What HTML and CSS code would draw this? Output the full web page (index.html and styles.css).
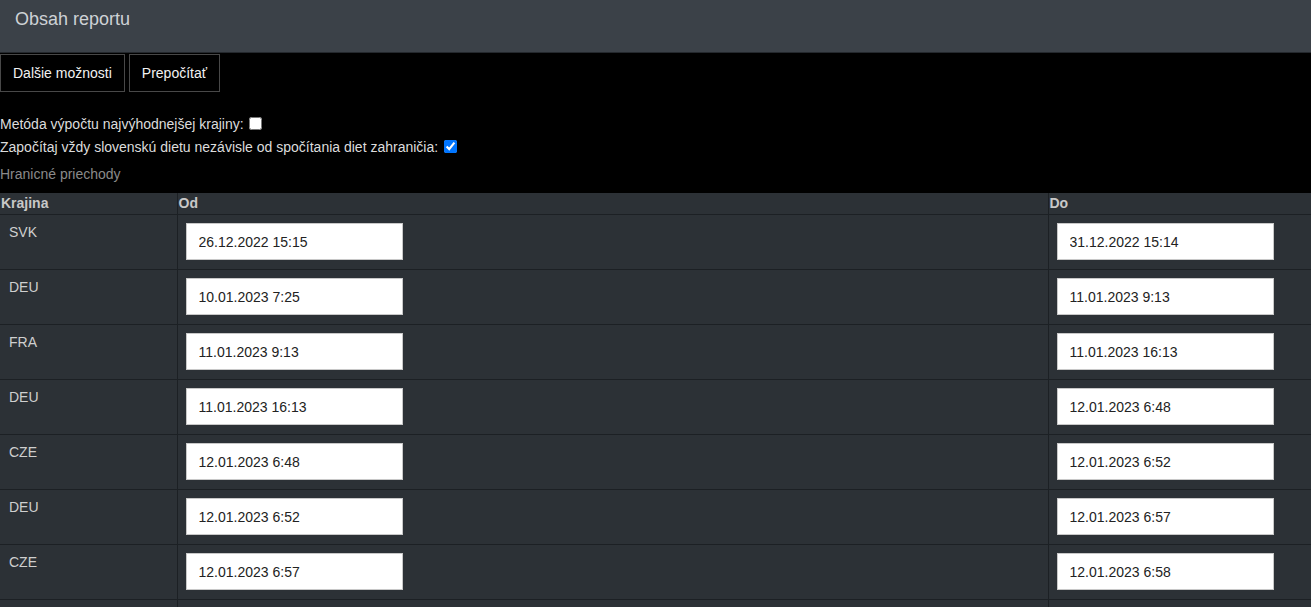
FILE: index.html
```html
<!DOCTYPE html>
<html lang="sk">
<head>
<meta charset="utf-8">
<title>Obsah reportu</title>
<link rel="stylesheet" href="styles.css">
</head>
<body>
<header class="topbar">
  <h1 class="title">Obsah reportu</h1>
</header>
<div class="actions">
  <button class="btn" type="button">Dalšie možnosti</button>
  <button class="btn" type="button">Prepočítať</button>
</div>
<div class="options">
  <label class="opt">Metóda výpočtu najvýhodnejšej krajiny: <input type="checkbox" class="chk"></label>
  <label class="opt">Započítaj vždy slovenskú dietu nezávisle od spočítania diet zahraničia: <input type="checkbox" class="chk" checked></label>
  <div class="section">Hranicné priechody</div>
</div>
<table class="grid">
  <colgroup>
    <col class="c1"><col class="c2"><col class="c3">
  </colgroup>
  <thead>
    <tr><th>Krajina</th><th>Od</th><th>Do</th></tr>
  </thead>
  <tbody>
    <tr><td>SVK</td><td><input class="field" value="26.12.2022 15:15"></td><td><input class="field" value="31.12.2022 15:14"></td></tr>
    <tr><td>DEU</td><td><input class="field" value="10.01.2023 7:25"></td><td><input class="field" value="11.01.2023 9:13"></td></tr>
    <tr><td>FRA</td><td><input class="field" value="11.01.2023 9:13"></td><td><input class="field" value="11.01.2023 16:13"></td></tr>
    <tr><td>DEU</td><td><input class="field" value="11.01.2023 16:13"></td><td><input class="field" value="12.01.2023 6:48"></td></tr>
    <tr><td>CZE</td><td><input class="field" value="12.01.2023 6:48"></td><td><input class="field" value="12.01.2023 6:52"></td></tr>
    <tr><td>DEU</td><td><input class="field" value="12.01.2023 6:52"></td><td><input class="field" value="12.01.2023 6:57"></td></tr>
    <tr><td>CZE</td><td><input class="field" value="12.01.2023 6:57"></td><td><input class="field" value="12.01.2023 6:58"></td></tr>
    <tr class="filler"><td></td><td></td><td></td></tr>
  </tbody>
</table>
</body>
</html>
```
FILE: styles.css
```css
html, body {
  margin: 0;
  padding: 0;
  background: #000;
  font-family: "Liberation Sans", Arial, sans-serif;
  font-size: 14px;
  color: #e2e2e2;
}
.topbar {
  height: 52px;
  background: #3b4148;
  border-bottom: 1px solid #24282d;
  display: flex;
  align-items: flex-start;
  padding-left: 15px;
}
.title {
  margin: 8px 0 0 0;
  font-size: 18px;
  font-weight: normal;
  color: #ced2d6;
  line-height: 23px;
}
.actions {
  display: flex;
  gap: 4px;
  margin-top: 1px;
}
.btn {
  height: 38px;
  padding: 0 12px;
  background: #000;
  border: 1px solid #484848;
  color: #f2f2f2;
  font-family: inherit;
  font-size: 14px;
  cursor: pointer;
}
.options {
  display: flex;
  flex-direction: column;
  padding-top: 20px;
}
.opt {
  display: flex;
  align-items: center;
  height: 23px;
  color: #dcdcdc;
  white-space: pre;
}
.chk {
  margin: 0 0 0 2px;
  width: 13px;
  height: 13px;
}
.section {
  color: #8a8a8a;
  height: 24px;
  line-height: 32px;
  margin-bottom: 11px;
}
.grid {
  width: 100%;
  border-collapse: collapse;
  background: #2c3136;
}
.c1 { width: 177px; }
.c3 { width: 263px; }
.grid th {
  text-align: left;
  font-weight: bold;
  color: #c8c8c8;
  padding: 1px 1px 2px 1px;
  height: 18px;
  border: 1px solid #1c2024;
  border-top: none;
  line-height: 18px;
}
.grid td {
  vertical-align: top;
  border: 1px solid #1c2024;
  padding: 8px 8px 9px 8px;
  color: #cfcfcf;
  line-height: 18px;
}
.grid td:first-child { padding-left: 9px; }
.grid th:first-child, .grid td:first-child { border-left: none; }
.grid th:last-child, .grid td:last-child { border-right: none; }
.filler td { height: 37px; }
.field {
  display: block;
  box-sizing: border-box;
  width: 217px;
  height: 37px;
  margin: 0;
  padding: 0 12px;
  border: 1px solid #c8c8c8;
  background: #fff;
  color: #222;
  font-family: inherit;
  font-size: 14px;
}
```
